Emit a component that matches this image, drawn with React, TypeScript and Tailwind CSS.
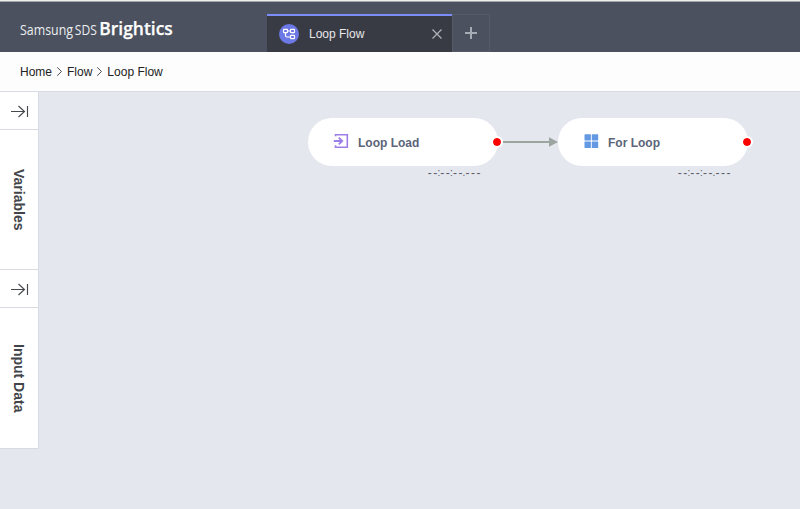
import React from "react";

const timer = "--:--:--.---".split("");

function Timer() {
  return (
    <div className="ml-[119px] mt-px flex h-3 text-[12px] leading-3 text-[#5a5d66]" aria-label="elapsed">
      {timer.map((c, i) => (
        <span key={i} className={c === "-" ? "flex w-[5.5px] justify-center" : "flex w-[1.6px] justify-center text-[10px]"}>
          {c}
        </span>
      ))}
    </div>
  );
}

function Node({ label, icon }: { label: string; icon: React.ReactNode }) {
  return (
    <div className="w-[191px]">
      <div className="relative flex h-12 w-[190px] items-center rounded-full bg-white pl-[25px]">
        {icon}
        <span className="ml-[9px] mt-px text-[12px] font-bold leading-4 text-[#5b6478]">{label}</span>
        <span className="absolute right-[-5px] top-[18px] h-3 w-3 rounded-full border-2 border-white bg-[#ff0000] bg-clip-padding" />
      </div>
      <Timer />
    </div>
  );
}

function Expand() {
  return (
    <div className="flex h-[38px] items-center border-b border-[#d9dbe2] pl-[11px] pt-[2px]">
      <svg width="18" height="13" viewBox="0 0 18 13" fill="none" stroke="#45484d" strokeWidth="1.15">
        <path d="M0 6.5H13.5M7.5 1L13.5 6.5L7.5 12M16.5 1V12" />
      </svg>
    </div>
  );
}

function Panel({ label, className, offset }: { label: string; className: string; offset: string }) {
  return (
    <div className={`flex flex-col border-b border-[#d9dbe2] ${className}`}>
      <Expand />
      <span className={`ml-[9px] w-5 text-[14px] font-bold leading-5 text-[#414449] [writing-mode:vertical-rl] ${offset}`}>
        {label}
      </span>
    </div>
  );
}

function Crumb() {
  return (
    <svg className="mx-[5px]" width="5" height="9" viewBox="0 0 5 9" fill="none" stroke="#4b4b4b">
      <path d="M.2.3L4.5 4.5L.2 8.7" />
    </svg>
  );
}

export default function App() {
  return (
    <div className="flex h-[509px] w-[800px] flex-col overflow-hidden bg-[#e4e7ee] font-['Liberation_Sans',Arial,sans-serif]">
      <header className="flex h-[52px] shrink-0 items-end border-t border-[#eeeeee] bg-[#4b515e]">
        <div className="flex h-full w-full items-end border-t border-[#a4a7ac]">
          <svg className="h-[50px] w-[267px] shrink-0" viewBox="0 0 267 50" fill="#fff" fontFamily="'Open Sans','Noto Sans',sans-serif">
            <text x="20" y="33" fontSize="14.5" fill="#eceef1" textLength="53" lengthAdjust="spacingAndGlyphs">Samsung</text>
            <text x="74.8" y="33" fontSize="14.5" fill="#eceef1" textLength="22" lengthAdjust="spacingAndGlyphs">SDS</text>
            <text x="99.3" y="33" fontSize="18.5" fontWeight="600" stroke="#fff" strokeWidth=".25" textLength="73.5" lengthAdjust="spacingAndGlyphs">Brightics</text>
          </svg>
          <div className="flex h-[38px] w-[185px] items-center border-t-2 border-[#7c8cf8] bg-[#393b44] pl-3 pr-[10px]">
            <svg width="20" height="20" viewBox="0 0 20 20" fill="none" stroke="#fff" strokeWidth="1.2">
              <circle cx="10" cy="10" r="10" fill="#6b78e5" stroke="none" />
              <rect x="4.5" y="5.4" width="4" height="3.2" rx=".5" />
              <rect x="11.5" y="5.4" width="4" height="3.2" rx=".5" />
              <rect x="11.5" y="11.4" width="4" height="3.2" rx=".5" />
              <path d="M8.5 7H11.5M6.5 8.6V11.5Q6.5 13 8 13H11.5" />
            </svg>
            <span className="ml-[10px] text-[12px] leading-4 text-[#e8e8eb]">Loop Flow</span>
            <svg className="ml-auto" width="10" height="10" viewBox="0 0 10 10" stroke="#b2b4b9" strokeWidth="1.2">
              <path d="M.5.5L9.5 9.5M9.5.5L.5 9.5" />
            </svg>
          </div>
          <div className="flex h-[38px] w-[38px] items-center justify-center border border-[#575b66]">
            <svg width="12" height="12" viewBox="0 0 12 12" stroke="#a7abb3" strokeWidth="2">
              <path d="M6 0V12M0 6H12" />
            </svg>
          </div>
        </div>
      </header>
      <nav className="flex h-10 shrink-0 items-center border-b border-[#d9dbe2] bg-[#fdfdfd] pl-5 text-[12px] text-[#222]">
        <span>Home</span>
        <Crumb />
        <span>Flow</span>
        <Crumb />
        <span>Loop Flow</span>
      </nav>
      <div className="flex flex-1">
        <aside className="h-[357px] w-[39px] border-r border-[#d9dbe2] bg-white">
          <Panel label="Variables" className="h-[178px]" offset="mt-[39px]" />
          <Panel label="Input Data" className="h-[179px]" offset="mt-[36px]" />
        </aside>
        <main className="flex items-start pl-[269px] pt-[26px]">
          <Node
            label="Loop Load"
            icon={
              <svg className="mb-[2px]" width="16" height="16" viewBox="0 0 16 16" fill="none" stroke="#9d7ee6" strokeWidth="1.6">
                <path d="M2.5 1.8H14.3V14.3H2.5V12.2M2.5 1V3.2" />
                <path d="M.8 8H9M5.8 4.6L9.2 8L5.8 11.4" strokeWidth="1.9" />
              </svg>
            }
          />
          <svg className="mt-[19px] shrink-0" width="59" height="10" viewBox="0 0 59 10">
            <path d="M4 5H51" stroke="#9da5a1" strokeWidth="2" />
            <path d="M50 .3L59 5L50 9.7Z" fill="#9da5a1" />
          </svg>
          <Node
            label="For Loop"
            icon={
              <svg className="mb-[2px]" width="16" height="16" viewBox="0 0 16 16" fill="#6399e2">
                <rect x="1.5" y="1.2" width="6.4" height="6.4" rx=".6" />
                <rect x="8.8" y="1.2" width="6.4" height="6.4" rx=".6" />
                <rect x="1.5" y="8.6" width="6.4" height="6.4" rx=".6" />
                <rect x="8.8" y="8.6" width="6.4" height="6.4" rx=".6" />
              </svg>
            }
          />
        </main>
      </div>
    </div>
  );
}
